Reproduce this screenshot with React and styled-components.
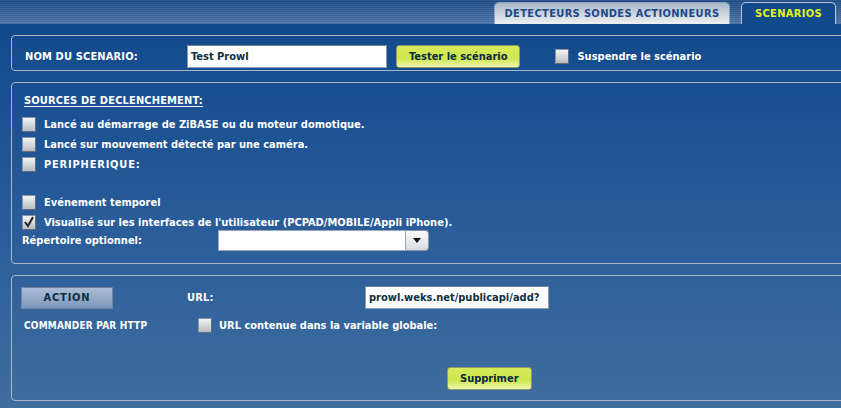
import React from 'react'
import styled, { createGlobalStyle } from 'styled-components'

const Global = createGlobalStyle`
    html, body {
        margin: 0;
        padding: 0;
    }
    body {
        width: 841px;
        height: 408px;
        overflow: hidden;
        font-family: "DejaVu Sans Condensed", "DejaVu Sans", Verdana, sans-serif;
        font-size: 11px;
        font-weight: bold;
        color: #fff;
        background: #3e6a9b;
        white-space: nowrap;
    }
`

function Checkbox({ checked }) {
    return (
        <Box>
            {checked && (
                <svg width="12" height="12" viewBox="0 0 12 12">
                    <path d="M2 6 L5 10 L10 1" stroke="#222" strokeWidth="2" fill="none" />
                </svg>
            )}
        </Box>
    )
}

function App() {
    return (
        <Page>
            <Global />
            <TopBar>
                <Tab>DETECTEURS SONDES ACTIONNEURS</Tab>
                <Tab active>SCENARIOS</Tab>
            </TopBar>
            <Main>
                <Panel>
                    <NameRow>
                        <Label width="162px">NOM DU SCENARIO:</Label>
                        <TextInput width="200px">Test Prowl</TextInput>
                        <GreenButton>Tester le scénario</GreenButton>
                        <Suspend>
                            <Checkbox />
                            <span>Suspendre le scénario</span>
                        </Suspend>
                    </NameRow>
                </Panel>

                <Panel>
                    <Sources>
                        <Heading>SOURCES DE DECLENCHEMENT:</Heading>
                        <CheckLine><Checkbox /><span>Lancé au démarrage de ZiBASE ou du moteur domotique.</span></CheckLine>
                        <CheckLine><Checkbox /><span>Lancé sur mouvement détecté par une caméra.</span></CheckLine>
                        <CheckLine><Checkbox /><Caps>PERIPHERIQUE:</Caps></CheckLine>
                        <Spacer />
                        <CheckLine><Checkbox /><span>Evénement temporel</span></CheckLine>
                        <CheckLine><Checkbox checked /><span>Visualisé sur les interfaces de l'utilisateur (PCPAD/MOBILE/Appli iPhone).</span></CheckLine>
                        <DirRow>
                            <Label width="196px" plain>Répertoire optionnel:</Label>
                            <Select>
                                <SelectField />
                                <SelectArrow>
                                    <svg width="8" height="5" viewBox="0 0 8 5"><path d="M0 0 H8 L4 5 Z" fill="#111" /></svg>
                                </SelectArrow>
                            </Select>
                        </DirRow>
                    </Sources>
                </Panel>

                <Panel>
                    <ActionGrid>
                        <ActionButton>ACTION</ActionButton>
                        <Label>URL:</Label>
                        <TextInput width="184px">prowl.weks.net/publicapi/add?</TextInput>
                        <Label indent="3px" small>COMMANDER PAR HTTP</Label>
                        <CheckLine gap="7px" indent="11px">
                            <Checkbox />
                            <span>URL contenue dans la variable globale:</span>
                        </CheckLine>
                    </ActionGrid>
                    <Footer>
                        <GreenButton>Supprimer</GreenButton>
                    </Footer>
                </Panel>

                <Panel />
            </Main>
        </Page>
    )
}

const Page = styled.div`
    display: flex;
    flex-direction: column;
    height: 408px;
    overflow: hidden;
`

const TopBar = styled.div`
    height: 24px;
    flex-shrink: 0;
    display: flex;
    align-items: flex-end;
    gap: 11px;
    padding-left: 494px;
    box-sizing: border-box;
    background:
        repeating-linear-gradient(to bottom, rgba(255,255,255,0.06) 0 1px, rgba(0,0,0,0.05) 1px 2px),
        linear-gradient(to bottom, #1e4c88, #4f77a9);
`

const Tab = styled.div`
    height: 22px;
    box-sizing: border-box;
    display: flex;
    align-items: center;
    justify-content: center;
    width: ${p => (p.active ? '95px' : '236px')};
    border-radius: 5px 5px 0 0;
    font-size: 11px;
    letter-spacing: 0.35px;
    color: ${p => (p.active ? '#e4f41c' : '#1a4a8a')};
    background: ${p => (p.active ? '#114a8a' : 'linear-gradient(to bottom, #a9b7c9, #eef0f2)')};
    border: 1px solid ${p => (p.active ? '#b9c6d8' : '#8fa3bd')};
    border-bottom: none;
`

const Main = styled.div`
    flex: 1;
    min-height: 0;
    overflow: hidden;
    display: flex;
    flex-direction: column;
    gap: 11px;
    padding-top: 11px;
    background: linear-gradient(to bottom, #114a8a, #1a5092 20%, #2d5f9a 60%, #406d9e);
`

const Panel = styled.div`
    flex-shrink: 0;
    margin: 0 -10px 0 11px;
    border: 1px solid #a9b7c8;
    border-radius: 4px;
    min-height: 20px;
`

const NameRow = styled.div`
    height: 24px;
    padding: 8px 0 2px 13px;
    display: flex;
    align-items: center;
`

const Label = styled.div`
    width: ${p => p.width || 'auto'};
    padding-left: ${p => p.indent || '0'};
    flex-shrink: 0;
    font-size: ${p => (p.small ? '10px' : '11px')};
    letter-spacing: ${p => (p.plain ? '0' : p.small ? '0.2px' : '0.15px')};
`

const TextInput = styled.div`
    width: ${p => p.width};
    height: 23px;
    box-sizing: border-box;
    background: #fff;
    border: 1px solid #8a9bb0;
    border-top-color: #6f8096;
    color: #0d2f3f;
    padding: 0 3px;
    display: flex;
    align-items: center;
    overflow: hidden;
`

const GreenButton = styled.div`
    margin-left: 9px;
    height: 21px;
    padding: 0 12px;
    display: flex;
    align-items: center;
    border: 1px solid #8c9a6a;
    border-radius: 3px;
    color: #0b2a40;
    background: linear-gradient(to bottom, #d6ea5a, #cfe74e 60%, #eef5b0);
`

const CheckLine = styled.div`
    display: flex;
    align-items: center;
    gap: ${p => p.gap || '8px'};
    padding-left: ${p => p.indent || '0'};
    height: 20px;
`

const Suspend = styled(CheckLine)`
    margin-left: 35px;
`

const Box = styled.div`
    width: 14px;
    height: 15px;
    box-sizing: border-box;
    flex-shrink: 0;
    display: flex;
    align-items: center;
    justify-content: center;
    border: 1px solid #5d6c80;
    border-top-color: #8895a6;
    border-left-color: #8895a6;
    background: linear-gradient(to bottom, #f4f4f4, #b9bcc0);
`

const Sources = styled.div`
    padding: 11px 0 12px 10px;
    display: flex;
    flex-direction: column;
`

const Heading = styled.div`
    margin: 0 0 4px 2px;
    height: 16px;
    letter-spacing: 0.15px;
    text-decoration: underline;
    text-underline-offset: 2px;
`

const Caps = styled.span`
    letter-spacing: 0.8px;
`

const Spacer = styled.div`
    height: 18px;
`

const DirRow = styled.div`
    display: flex;
    align-items: center;
    height: 21px;
    margin-top: -2px;
`

const Select = styled.div`
    display: flex;
    height: 21px;
`

const SelectField = styled.div`
    width: 186px;
    background: #fff;
    border: 1px solid #9aa7b7;
`

const SelectArrow = styled.div`
    width: 22px;
    display: flex;
    align-items: center;
    justify-content: center;
    border: 1px solid #8a96a6;
    border-left: none;
    border-radius: 0 4px 4px 0;
    background: linear-gradient(to bottom, #fbfbfb, #d9dbde);
`

const ActionGrid = styled.div`
    display: grid;
    grid-template-columns: 166px 178px auto;
    grid-template-rows: 23px 23px;
    row-gap: 5px;
    align-items: center;
    padding: 10px 0 0 9px;
`

const ActionButton = styled.div`
    width: 92px;
    height: 22px;
    box-sizing: border-box;
    display: flex;
    align-items: center;
    justify-content: center;
    letter-spacing: 0.8px;
    color: #0d2f3f;
    border: 1px solid #6f83a0;
    background: linear-gradient(to bottom, #a9bdd6, #7e98ba);
`

const Footer = styled.div`
    display: flex;
    padding: 30px 0 10px 435px;

    & > div {
        margin-left: 0;
    }
`

export default App
